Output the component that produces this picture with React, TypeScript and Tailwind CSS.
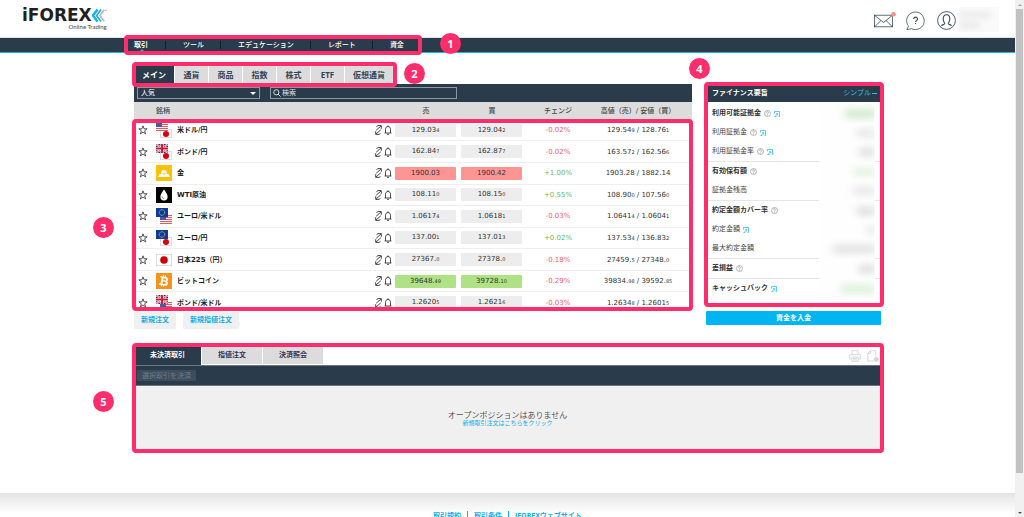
import type { ReactNode } from 'react'
import { FaBtc } from 'react-icons/fa'

type FlagName = 'us' | 'jp' | 'gb' | 'eu'
type Instrument = {
  name: string
  icon: ReactNode
  sell: [string, string]
  buy: [string, string]
  tone?: 'red' | 'green'
  change: string
  high: [string, string]
  low: [string, string]
}

function Flag({ name, x, y }: { name: FlagName; x: number; y: number }) {
  return (
    <svg x={x} y={y} width="12" height="9" viewBox="0 0 24 18">
      {name === 'us' && (
        <>
          <rect width="24" height="18" fill="#f6eeee" />
          {[0, 4, 8, 12, 16].map((top) => (
            <rect key={top} y={top} width="24" height="2" fill="#d0616b" />
          ))}
          <rect width="12" height="10" fill="#4a5c94" />
        </>
      )}
      {name === 'jp' && (
        <>
          <rect x="1" y="1" width="22" height="16" fill="#fff" stroke="#ddd" strokeWidth="2" />
          <circle cx="12" cy="10" r="6" fill="#d80010" />
        </>
      )}
      {name === 'gb' && (
        <>
          <rect width="24" height="18" fill="#1d2f7d" />
          <path d="M0 0 24 18M24 0 0 18" stroke="#fff" strokeWidth="4" />
          <path d="M0 0 24 18M24 0 0 18" stroke="#d8142c" strokeWidth="1.5" />
          <path d="M12 0V18M0 9H24" stroke="#fff" strokeWidth="6.5" />
          <path d="M12 0V18M0 9H24" stroke="#d8142c" strokeWidth="3.8" />
        </>
      )}
      {name === 'eu' && (
        <>
          <rect width="24" height="18" fill="#0b3a9c" />
          <circle cx="12" cy="9" r="5.5" fill="none" stroke="#e8d23c" strokeWidth="1.8" strokeDasharray="1.8 1.1" />
        </>
      )}
    </svg>
  )
}

function Pair({ front, back }: { front: FlagName; back: FlagName }) {
  return (
    <svg className="block size-4" viewBox="0 0 16 16">
      <Flag name={back} x={4} y={7} />
      <Flag name={front} x={0} y={0} />
    </svg>
  )
}

const goldIcon = (
  <svg className="block size-4" viewBox="0 0 16 16">
    <rect width="16" height="16" fill="#fdbf0a" />
    <path d="M6 5.200h4l1.200 3.200H4.800zM3.300 9h4.200l.5 3H2zM8.500 9h4.200l1.300 3H8z" fill="#fff" />
  </svg>
)

const oilIcon = (
  <svg className="block size-4" viewBox="0 0 16 16">
    <rect width="16" height="16" fill="#050505" />
    <path d="M8 2.500c2 3 3.600 5 3.600 7.200a3.600 3.800 0 0 1-7.200 0C4.400 7.500 6 5.500 8 2.500z" fill="#fff" />
    <path d="M6 9.500c0 1.200.7 2 1.800 2.200" fill="none" stroke="#555" strokeWidth=".7" />
  </svg>
)

const nikkeiIcon = (
  <svg className="block size-4" viewBox="0 0 16 16">
    <rect x=".5" y="2.500" width="15" height="11" fill="#fff" stroke="#ddd" />
    <circle cx="8" cy="8" r="3.800" fill="#d00008" />
  </svg>
)

const bitcoinIcon = (
  <span className="flex size-4 items-center justify-center bg-[#f7931a] text-white">
    <FaBtc className="size-3 rotate-12" />
  </span>
)

const instruments: Instrument[] = [
  { name: '米ドル/円', icon: <Pair front="us" back="jp" />, sell: ['129.03', '4'], buy: ['129.04', '2'], change: '-0.02%', high: ['129.54', '9'], low: ['128.76', '1'] },
  { name: 'ポンド/円', icon: <Pair front="gb" back="jp" />, sell: ['162.84', '7'], buy: ['162.87', '7'], change: '-0.02%', high: ['163.57', '2'], low: ['162.56', '6'] },
  { name: '金', icon: goldIcon, sell: ['1900.03', ''], buy: ['1900.42', ''], tone: 'red', change: '+1.00%', high: ['1903.28', ''], low: ['1882.14', ''] },
  { name: 'WTI原油', icon: oilIcon, sell: ['108.11', '0'], buy: ['108.15', '0'], change: '+0.55%', high: ['108.90', '0'], low: ['107.56', '0'] },
  { name: 'ユーロ/米ドル', icon: <Pair front="eu" back="us" />, sell: ['1.0617', '4'], buy: ['1.0618', '1'], change: '-0.03%', high: ['1.0641', '4'], low: ['1.0604', '1'] },
  { name: 'ユーロ/円', icon: <Pair front="eu" back="jp" />, sell: ['137.00', '1'], buy: ['137.01', '3'], change: '+0.02%', high: ['137.53', '4'], low: ['136.83', '2'] },
  { name: '日本225（円）', icon: nikkeiIcon, sell: ['27367.', '0'], buy: ['27378.', '0'], change: '-0.18%', high: ['27459.', '5'], low: ['27348.', '0'] },
  { name: 'ビットコイン', icon: bitcoinIcon, sell: ['39648.', '49'], buy: ['39728.', '10'], tone: 'green', change: '-0.29%', high: ['39834.', '98'], low: ['39592.', '85'] },
  { name: 'ポンド/米ドル', icon: <Pair front="gb" back="us" />, sell: ['1.2620', '5'], buy: ['1.2621', '6'], change: '-0.03%', high: ['1.2634', '8'], low: ['1.2601', '5'] },
]

const financeGroups = [
  [
    { label: '利用可能証拠金', bold: true, help: true, popup: true, smudge: 'w-[30px] bg-[#b9dfb5]' },
    { label: '利用証拠金', help: true, popup: true, smudge: 'w-[18px] bg-[#dedede]' },
    { label: '利用証拠金率', help: true, popup: true, smudge: 'w-[16px] bg-[#d2d2d2]' },
  ],
  [
    { label: '有効保有額', bold: true, help: true, smudge: 'w-[22px] bg-[#d9efd6]' },
    { label: '証拠金残高', smudge: 'w-[22px] bg-[#dedede]' },
  ],
  [
    { label: '約定金額カバー率', bold: true, help: true, smudge: 'w-[18px] bg-[#d0d0d0]' },
    { label: '約定金額', popup: true, smudge: 'w-[8px] bg-[#dcdcdc]' },
    { label: '最大約定金額', smudge: 'w-[42px] bg-[#d6d6d6]' },
  ],
  [{ label: '差損益', bold: true, help: true, smudge: 'w-[16px] bg-[#cfcfcf]' }],
  [{ label: 'キャッシュバック', bold: true, popup: true, smudge: 'w-[34px] bg-[#cfeacb]' }],
]

const navItems = ['取引', 'ツール', 'エデュケーション', 'レポート', '資金']
const marketTabs = ['メイン', '通貨', '商品', '指数', '株式', 'ETF', '仮想通貨']
const positionTabs = ['未決済取引', '指値注文', '決済照会']
const footerLinks = ['取引規約', '取引条件', 'iFOREXウェブサイト']

function Frame({ className }: { className: string }) {
  return <div className={`pointer-events-none absolute z-10 rounded-[4px] border-4 border-[#ff2d6b] ${className}`} />
}

function Marker({ n, className }: { n: number; className: string }) {
  return (
    <span
      className={`absolute z-20 flex size-[21px] items-center justify-center rounded-full bg-[#ff2d6b] text-[11px] leading-none font-bold text-white ${className}`}
    >
      {n}
    </span>
  )
}

function Price({ value }: { value: [string, string] }) {
  return (
    <>
      {value[0]}
      <span className="text-[5px]">{value[1]}</span>
    </>
  )
}

function PriceButton({ value, tone }: { value: [string, string]; tone?: 'red' | 'green' }) {
  const bg = tone === 'red' ? 'bg-[#ff9494]' : tone === 'green' ? 'bg-[#aee284]' : 'bg-[#ededed]'
  return (
    <button type="button" className={`block h-[13px] w-[61px] rounded-[1px] text-center leading-[13px] ${bg}`}>
      <Price value={value} />
    </button>
  )
}

function Header() {
  return (
    <header className="flex h-[38px] items-start justify-between border-b border-[#dde3e8] pr-4 pl-[22px]">
      <a href="#" className="block pt-2 text-[#1f1f1f]">
        <span className="flex">
          <span className="font-['DejaVu_Sans',sans-serif] text-[17px] leading-[15px] font-bold">iFOREX</span>
          <svg className="mt-px h-[13px] w-[15px]" viewBox="0 0 15 13" fill="none">
            <path d="M5.500.5 1 6.500l4.500 6" stroke="#12aeea" strokeWidth="2.400" />
            <path d="M9 .5 4.600 6.500 9 12.500" stroke="#12aeea" strokeWidth="1.600" />
            <path d="M12.200.8 8 6.500l4.200 5.700" stroke="#b9bcc0" strokeWidth="1.800" />
            <circle cx="14" cy="1.200" r=".7" fill="#999" />
          </svg>
        </span>
        <span className="block text-right font-['Lato',sans-serif] text-[6px] leading-[8px] text-[#444]">Online Trading</span>
      </a>
      <div className="flex pt-[9px] text-[#3b4a58]">
        <button type="button" aria-label="Messages" className="mr-[10px] block">
          <svg className="h-[19px] w-[22px]" viewBox="0 0 22 19" fill="none" stroke="currentColor" strokeWidth=".8">
            <rect x=".5" y="4.200" width="18" height="11.600" />
            <path d="m.5 4.200 9 7.300 9-7.300M.5 15.800l6.500-6.300M18.500 15.800 12 9.500" />
            <circle cx="19.500" cy="3.200" r="2.300" fill="#ff8d8d" stroke="none" />
          </svg>
        </button>
        <button type="button" aria-label="Help" className="mr-3 block">
          <svg className="size-[19px]" viewBox="0 0 19 19" fill="none" stroke="currentColor" strokeWidth=".8">
            <path d="M2.500 15.200A8.800 8.800 0 1 1 5.600 17.700L.8 18.500z" />
            <path d="M7.700 8a1.900 1.900 0 1 1 2.800 1.700c-.7.4-.9.700-.9 1.300M9.600 12v1.100" strokeWidth="1.100" />
          </svg>
        </button>
        <button type="button" aria-label="Account" className="mr-[3px] block">
          <svg className="size-[19px]" viewBox="0 0 19 19" fill="none" stroke="currentColor">
            <circle cx="9.500" cy="9.500" r="8.900" strokeWidth=".9" />
            <path d="M4.500 14.700c.8-1.200 3-1 3.200-2 .1-.9-1.500-2-1.500-4.700 0-2.700 1.300-4.200 3.300-4.200s3.300 1.500 3.300 4.200c0 2.700-1.600 3.800-1.500 4.700.2 1 2.400.8 3.200 2" strokeWidth="1.100" />
          </svg>
        </button>
        <div className="-mt-0.5 flex h-[25px] w-10 flex-col gap-1.5 bg-[#fafafa] pt-1.5">
          <div className="h-1 w-8 bg-[#e4e4e4] blur-[3px]" />
          <div className="h-1 w-5 bg-[#e0e0e0] blur-[3px]" />
        </div>
      </div>
    </header>
  )
}

function Nav() {
  return (
    <nav className="h-[15px] border-b border-[#1fb5ea] bg-[#2a3b4b]">
      <div className="relative mx-auto flex h-full w-full max-w-[747px] items-center text-[7px] text-white">
        {navItems.map((item, i) => (
          <a
            key={item}
            href="#"
            className={i === 0 ? 'relative pr-[17px] leading-[8px] font-bold' : 'border-l border-[#131e28] pr-4 pl-[17px] leading-[8px] font-medium'}
          >
            {item}
            {i === 0 && (
              <span className="absolute top-[8px] left-[5px] border-x-[3px] border-b-[3px] border-x-transparent border-b-[#1fb5ea]" />
            )}
          </a>
        ))}
        <Frame className="-top-[3px] -left-[10px] h-5 w-[298px]" />
        <Marker n={1} className="-top-[5px] left-[306px]" />
      </div>
    </nav>
  )
}

function InstrumentRow({ item }: { item: Instrument }) {
  return (
    <tr className="border-b border-[#efefef]">
      <td>
        <button type="button" aria-label="Favourite" className="mx-auto block">
          <svg className="size-[10px]" viewBox="0 0 24 24" fill="none" stroke="#333" strokeWidth="2">
            <path d="m12 2 2.600 7.200H22l-6 4.600 2.200 7.500L12 16.800l-6.200 4.500L8 13.800 2 9.200h7.400z" />
          </svg>
        </button>
      </td>
      <td className="pl-1">{item.icon}</td>
      <td className="font-bold text-[#1d1d1d]">{item.name}</td>
      <td>
        <div className="flex items-center gap-[2px] text-[#333]">
          <svg className="h-[10px] w-[7px]" viewBox="0 0 7 10" fill="none" stroke="currentColor" strokeWidth=".9">
            <path d="M1.500 1.600 3 .6h3.300v3.200M6 1 1.200 5.200M5.500 8.400 4 9.400H.7V6.200M1 9 5.800 4.800" />
          </svg>
          <svg className="h-[10px] w-2" viewBox="0 0 8 10" fill="none" stroke="currentColor" strokeWidth=".9">
            <path d="M.6 8h6.800M1.500 8V4.300C1.500 2.600 2.500 1.500 4 1.500s2.500 1.100 2.500 2.800V8M4 .4v1M3 9.300h2" />
          </svg>
        </div>
      </td>
      <td className="pl-[2px]">
        <PriceButton value={item.sell} tone={item.tone} />
      </td>
      <td className="pl-[2px]">
        <PriceButton value={item.buy} tone={item.tone} />
      </td>
      <td className={`text-center ${item.change.startsWith('+') ? 'text-[#66b966]' : 'text-[#f2606c]'}`}>{item.change}</td>
      <td className="pr-[7px] text-center">
        <Price value={item.high} /> / <Price value={item.low} />
      </td>
    </tr>
  )
}

function Market() {
  return (
    <section className="relative min-w-0 flex-1">
      <div className="flex h-[18px] gap-px">
        {marketTabs.map((tab, i) => (
          <button
            key={tab}
            type="button"
            className={`min-w-[33px] px-2 text-[8px] font-bold ${i === 0 ? 'bg-[#2a3b4b] text-white' : 'bg-[#dcdcdc] text-[#34465a]'}`}
          >
            {tab}
          </button>
        ))}
      </div>
      <div className="flex h-[18px] items-center gap-[10px] bg-[#2a3b4b] px-[3px] text-[7px]">
        <div className="relative">
          <select
            aria-label="カテゴリー"
            className="block h-3 w-[123px] appearance-none border border-[#8d98a3] bg-transparent px-[3px] leading-[8px] text-white"
          >
            <option>人気</option>
          </select>
          <span className="pointer-events-none absolute top-[5px] right-[4px] border-x-[3px] border-t-[3px] border-x-transparent border-t-white" />
        </div>
        <label className="flex h-3 w-[187px] items-center gap-px border border-[#8d98a3] px-[2px] text-white">
          <svg className="size-2 shrink-0" viewBox="0 0 8 8" fill="none" stroke="currentColor" strokeWidth=".8">
            <circle cx="3.300" cy="3.300" r="2.600" />
            <path d="m5.200 5.200 2.400 2.400" />
          </svg>
          <input type="search" aria-label="検索" placeholder="検索" className="h-2 w-full min-w-0 bg-transparent leading-[8px] outline-none placeholder:text-[#dfe3e7]" />
        </label>
      </div>
      <div className="h-[206px] overflow-hidden">
        <table className="h-[212px] w-full table-fixed border-collapse font-['DejaVu_Sans','Noto_Sans_CJK_JP',sans-serif] text-[7px] leading-[10px] text-[#333]">
          <colgroup>
            <col className="w-[18px]" />
            <col className="w-[25px]" />
            <col />
            <col className="w-[18px]" />
            <col className="w-[66px]" />
            <col className="w-[66px]" />
            <col className="w-[66px]" />
            <col className="w-[101px]" />
          </colgroup>
          <thead>
            <tr className="h-[18px] bg-[#dcdcdc] text-[#444]">
              <th />
              <th colSpan={2} className="pl-1 text-left font-medium">銘柄</th>
              <th />
              <th className="font-medium">売</th>
              <th className="font-medium">買</th>
              <th className="font-medium">チェンジ</th>
              <th className="pr-[7px] font-medium whitespace-nowrap">高値（売）/ 安値（買）</th>
            </tr>
          </thead>
          <tbody>
            {instruments.map((item) => (
              <InstrumentRow key={item.name} item={item} />
            ))}
          </tbody>
        </table>
      </div>
      <div className="mt-1 flex gap-[7px]">
        {['新規注文', '新規指値注文'].map((label) => (
          <button key={label} type="button" className="h-[17px] rounded-[1px] bg-[#f0f0f0] px-[7px] text-[7px] font-bold text-[#12aeea]">
            {label}
          </button>
        ))}
      </div>
      <Frame className="-top-1 -left-0.5 h-[25px] w-[265px]" />
      <Marker n={2} className="-top-[3px] left-[270px]" />
      <Frame className="top-[53px] -right-px -left-0.5 h-[192px]" />
      <Marker n={3} className="top-[151px] -left-[41px]" />
    </section>
  )
}

function Finance() {
  return (
    <aside className="relative mt-[18px] w-[175px] shrink-0 text-[7px]">
      <div className="flex h-[18px] items-center justify-between bg-[#2a3b4b] pr-1 pl-[6px]">
        <h2 className="font-bold text-white">ファイナンス要旨</h2>
        <button type="button" className="flex items-center gap-px text-[#35bdf0]">
          シンプル
          <span className="h-px w-[5px] bg-[#35bdf0]" />
        </button>
      </div>
      <div className="pt-[2px] pb-[6px] text-[#444]">
        {financeGroups.map((group, i) => (
          <div key={i} className="border-b border-[#e6e6e6] last:border-b-0">
            {group.map((row) => (
              <div key={row.label} className="flex h-[19px] items-center gap-[3px] px-[6px]">
                <span className={row.bold ? 'font-bold text-[#333]' : ''}>{row.label}</span>
                {row.help && (
                  <svg className="size-[7px] shrink-0" viewBox="0 0 14 14" fill="none" stroke="#888" strokeWidth="1.200">
                    <circle cx="7" cy="7" r="6" />
                    <path d="M5 5.500a2 2 0 1 1 3 1.800c-.8.400-1 .8-1 1.500M7 9.800v1.200" />
                  </svg>
                )}
                {row.popup && (
                  <svg className="size-[6px] shrink-0" viewBox="0 0 12 12" fill="none" stroke="#35bdf0" strokeWidth="1.600">
                    <path d="M1 5V1h10v10H9M1 11h4M4 5.500h3.500V9M7.500 5.500 2 11" />
                  </svg>
                )}
                <span className="relative ml-auto flex h-5 w-[56px] shrink-0 items-center justify-end self-start overflow-hidden bg-[#fefefe]">
                  <span className={`h-1.5 blur-[4px] ${row.smudge}`} />
                </span>
              </div>
            ))}
          </div>
        ))}
      </div>
      <button type="button" className="mt-[7px] block h-[14px] w-full rounded-[1px] bg-[#00b5f1] font-bold text-white">
        資金を入金
      </button>
      <Frame className="-top-0.5 -right-[3px] -left-0.5 h-[225px]" />
      <Marker n={4} className="-top-[26px] -left-[17px]" />
    </aside>
  )
}

function Positions() {
  return (
    <section className="relative mt-[17px] text-[7px]">
      <div className="flex h-[19px] items-stretch gap-px">
        {positionTabs.map((tab, i) => (
          <button
            key={tab}
            type="button"
            className={`px-4 font-bold ${i === 0 ? 'bg-[#2a3b4b] text-white' : 'mb-px bg-[#dcdcdc] text-[#34365a]'}`}
          >
            {tab}
          </button>
        ))}
        <div className="ml-auto flex items-center gap-[6px] pr-[2px] text-[#d5d5d5]">
          <button type="button" aria-label="Print">
            <svg className="size-3" viewBox="0 0 12 12" fill="none" stroke="currentColor" strokeWidth=".9">
              <path d="M3 4.500V.7h6v3.800M2.500 9H.7V4.700h10.600V9H9.500M2.800 7h6.400v4.300H2.800zM4 8.500h4M4 10h4" />
            </svg>
          </button>
          <button type="button" aria-label="Export">
            <svg className="size-3" viewBox="0 0 12 12" fill="none" stroke="currentColor" strokeWidth=".9">
              <path d="M7 11H.8V3.500L3.500.7h5.300v6.500M3.500.7v2.800H.8" />
              <circle cx="9.300" cy="9.500" r="2" fill="currentColor" />
            </svg>
          </button>
        </div>
      </div>
      <div className="flex h-[21px] items-center border-y border-[#6b7681] bg-[#2a3b4b] px-[3px]">
        <button type="button" disabled className="h-[11px] rounded-[1px] bg-[#3d4d5c] px-[5px] leading-[11px] text-[#6f7c88]">
          選択取引を決済
        </button>
      </div>
      <div className="flex h-[65px] flex-col items-center justify-center bg-[#f0f0f0]">
        <p className="text-[8px] leading-[9px] text-[#555]">オープンポジションはありません</p>
        <a href="#" className="text-[6px] leading-[8px] text-[#12aeea]">新規取引注文はこちらをクリック</a>
      </div>
      <Frame className="-top-[3px] -right-[3px] -left-0.5 h-[110px]" />
      <Marker n={5} className="top-[45px] -left-[41px]" />
    </section>
  )
}

function ScrollBar() {
  return (
    <div aria-hidden="true" className="flex w-[9px] shrink-0 flex-col items-center bg-[#f1f1f1]">
      <div className="flex h-[9px] shrink-0 items-center">
        <span className="border-x-2 border-b-2 border-x-transparent border-b-[#a3a3a3]" />
      </div>
      <div className="min-h-0 w-full flex-1 px-px">
        <div className="h-[93%] bg-[#c1c1c1]" />
      </div>
      <div className="flex h-[9px] shrink-0 items-center">
        <span className="border-x-2 border-t-2 border-x-transparent border-t-[#505050]" />
      </div>
    </div>
  )
}

export default function App() {
  return (
    <div className="flex h-screen overflow-hidden bg-white font-['Open_Sans','Noto_Sans_CJK_JP',sans-serif]">
      <div className="min-w-0 flex-1 overflow-hidden">
        <Header />
        <Nav />
        <main className="mx-auto w-full max-w-[747px] pt-[13px] pb-[42px]">
          <div className="flex items-start gap-[14px]">
            <Market />
            <Finance />
          </div>
          <Positions />
        </main>
        <footer className="bg-linear-to-b from-[#e4e4e4] to-white to-50% pt-[18px] pb-3">
          <div className="flex justify-center text-[7px] leading-[10px] font-bold text-[#12aeea]">
            {footerLinks.map((label, i) => (
              <a key={label} href="#" className={i === 0 ? 'px-[6px]' : 'border-l border-[#12aeea] px-[6px]'}>
                {label}
              </a>
            ))}
          </div>
        </footer>
      </div>
      <ScrollBar />
    </div>
  )
}
